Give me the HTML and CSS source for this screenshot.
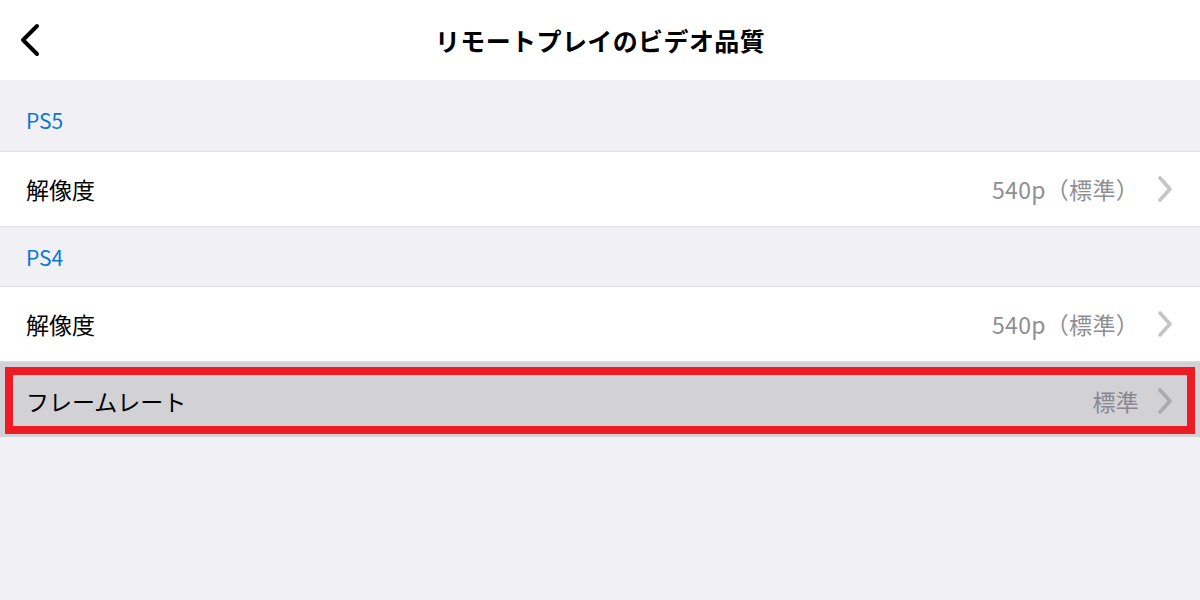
FILE: index.html
```html
<!DOCTYPE html>
<html lang="ja">
<head>
  <meta charset="UTF-8">
  <meta name="viewport" content="width=device-width, initial-scale=1.0">
  <title>リモートプレイのビデオ品質</title>
  <link rel="stylesheet" href="styles.css">
</head>
<body>
  <header class="topbar">
    <div class="back">
      <svg width="24" height="34" viewBox="0 0 24 34">
        <path d="M19 3 L5 17 L19 31" fill="none" stroke="#000" stroke-width="4" stroke-linecap="round" stroke-linejoin="round"/>
      </svg>
    </div>
    <h1 class="title">リモートプレイのビデオ品質</h1>
    <div></div>
  </header>

  <main class="settings">
    <div class="group-label first">PS5</div>
    <div class="row">
      <span class="row-name">解像度</span>
      <span class="row-value">540p（標準）</span>
      <svg class="chev" width="18" height="28" viewBox="0 0 18 28">
        <path d="M4 3 L14 14 L4 25" fill="none" stroke="#c4c4c9" stroke-width="3.6" stroke-linecap="round" stroke-linejoin="round"/>
      </svg>
    </div>

    <div class="group-label">PS4</div>
    <div class="row">
      <span class="row-name">解像度</span>
      <span class="row-value">540p（標準）</span>
      <svg class="chev" width="18" height="28" viewBox="0 0 18 28">
        <path d="M4 3 L14 14 L4 25" fill="none" stroke="#c4c4c9" stroke-width="3.6" stroke-linecap="round" stroke-linejoin="round"/>
      </svg>
    </div>
    <div class="row selected">
      <div class="highlight">
        <span class="row-name">フレームレート</span>
        <span class="row-value">標準</span>
        <svg class="chev" width="18" height="28" viewBox="0 0 18 28">
          <path d="M4 3 L14 14 L4 25" fill="none" stroke="#a9a9ae" stroke-width="3.6" stroke-linecap="round" stroke-linejoin="round"/>
        </svg>
      </div>
    </div>
  </main>
</body>
</html>
```

FILE: styles.css
```css
/* Base */
body {
  margin: 0;
  background-color: #f0f0f5;
  font-family: "Noto Sans CJK JP", "Noto Sans", sans-serif;
  color: #000;
}
/* Top bar */
.topbar {
  height: 80px;
  background-color: #fff;
  display: grid;
  grid-template-columns: 1fr auto 1fr;
  align-items: center;
}
.back {
  padding-left: 18px;
  display: flex;
  align-items: center;
}
.title {
  margin: 0;
  font-size: 25px;
  font-weight: 700;
  letter-spacing: 0.4px;
}
/* Group labels */
.group-label {
  height: 59px;
  padding-left: 26px;
  display: flex;
  align-items: center;
  color: #0b78d0;
  font-size: 21px;
  border-bottom: 1px solid #dedee3;
}
.group-label.first {
  height: 62px;
  padding-top: 9px;
}
/* Rows */
.row {
  height: 74px;
  background-color: #fff;
  display: flex;
  align-items: center;
  padding: 0 26px 0 26px;
  border-bottom: 1px solid #dedee3;
  font-size: 23px;
}
.row-name {
  flex: 1;
}
.row-value {
  color: #8e8e93;
  margin-right: 17px;
  letter-spacing: 0.3px;
}
.chev {
  display: block;
}
.row.selected {
  height: 75px;
  padding: 5px 5px 3px 5px;
  box-sizing: border-box;
  background-color: #d1d1d6;
  border-bottom: none;
}
.highlight {
  flex: 1;
  height: 100%;
  box-sizing: border-box;
  border: 8px solid #ed1c24;
  display: flex;
  align-items: center;
  padding: 0 13px 0 13px;
}
.highlight .row-value {
  color: #88888d;
}
```
